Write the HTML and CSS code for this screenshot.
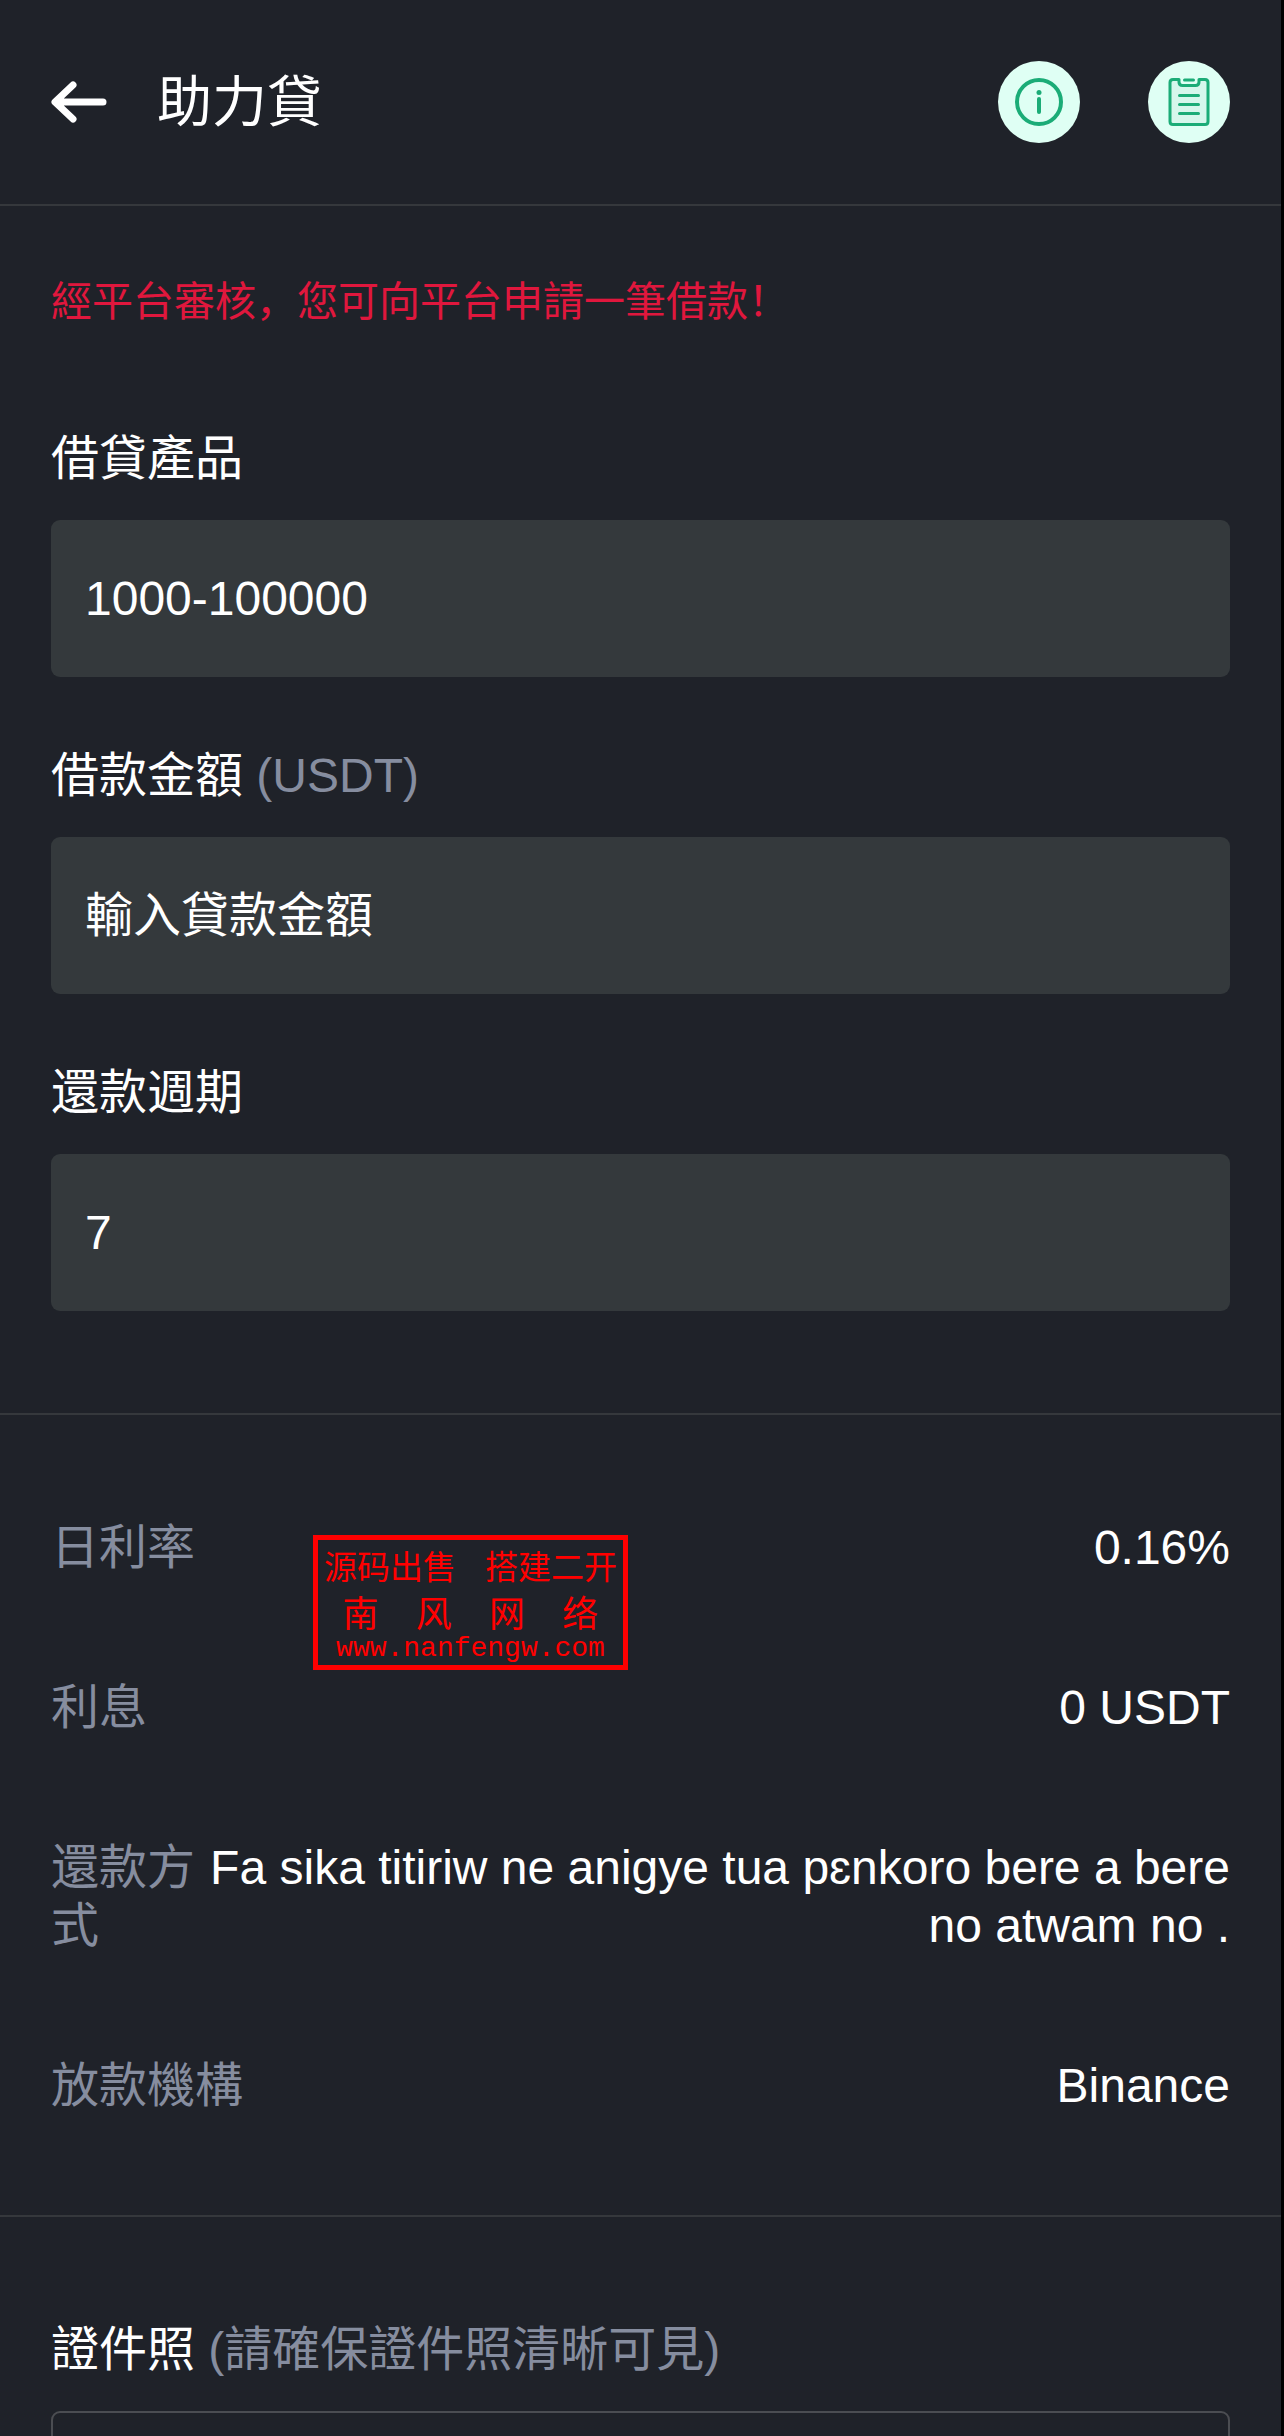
FILE: index.html
```html
<!DOCTYPE html>
<html lang="zh-CN">
<head>
    <meta charset="UTF-8">
    <meta name="viewport" content="width=device-width, initial-scale=1.0">
    <title>助力貸</title>
    <link rel="stylesheet" href="styles.css">
</head>
<body>

    <header class="header">
        <button class="icon-button" type="button" aria-label="返回">
            <svg class="back-icon" viewBox="0 0 56 42" fill="none" stroke="#fff" stroke-width="7" stroke-linecap="round" stroke-linejoin="round">
                <path d="M22 4 L4 21 L22 38 M5 21 H52"/>
            </svg>
        </button>
        <h1>助力貸</h1>
        <div class="header-actions">
            <button class="icon-button" type="button" aria-label="說明">
                <svg class="round-icon" viewBox="0 0 82 82" fill="none" stroke="#1bac77" stroke-width="4" stroke-linecap="round">
                    <circle cx="41" cy="41" r="41" fill="#dffff4" stroke="none"/>
                    <circle cx="41" cy="41" r="22"/>
                    <path d="M41 38 V51"/>
                    <circle cx="41" cy="31.5" r="2.5" fill="#1bac77" stroke="none"/>
                </svg>
            </button>
            <button class="icon-button" type="button" aria-label="借款記錄">
                <svg class="round-icon" viewBox="0 0 82 82" fill="none" stroke="#1bac77" stroke-width="3" stroke-linecap="round" stroke-linejoin="round">
                    <circle cx="41" cy="41" r="41" fill="#dffff4" stroke="none"/>
                    <path d="M31 18.5 H25 Q22 18.5 22 21.5 V60.5 Q22 63.5 25 63.5 H57 Q60 63.5 60 60.5 V21.5 Q60 18.5 57 18.5 H51 V21 Q51 24.5 47.5 24.5 H34.5 Q31 24.5 31 21 V18.5" fill="#d6f7ec"/>
                    <path d="M36.5 19 H45.5 M31.5 34.5 H50.5 M31.5 43.5 H50.5 M31.5 52.5 H50.5"/>
                </svg>
            </button>
        </div>
    </header>

    <main>
        <form class="section form">
            <p class="notice">經平台審核，您可向平台申請一筆借款！</p>

            <div class="field">
                <label for="product">借貸產品</label>
                <select id="product" class="control">
                    <option>1000-100000</option>
                </select>
            </div>

            <div class="field">
                <label for="amount">借款金額 <span class="muted">(USDT)</span></label>
                <input id="amount" class="control" type="text" placeholder="輸入貸款金額">
            </div>

            <div class="field">
                <label for="period">還款週期</label>
                <select id="period" class="control">
                    <option>7</option>
                </select>
            </div>
        </form>

        <section class="section details">
            <div class="row">
                <span class="muted">日利率</span>
                <span class="value">0.16%</span>
            </div>
            <div class="row">
                <span class="muted">利息</span>
                <span class="value">0 USDT</span>
            </div>
            <div class="row">
                <span class="muted">還款方式</span>
                <span class="value">Fa sika titiriw ne anigye tua pɛnkoro bere a bere no atwam no .</span>
            </div>
            <div class="row">
                <span class="muted">放款機構</span>
                <span class="value">Binance</span>
            </div>

            <!-- Stamp over the rows -->
            <div class="stamp">
                <div class="stamp-top"><span>源码出售</span><span>搭建二开</span></div>
                <div class="stamp-name"><span>南</span><span>风</span><span>网</span><span>络</span></div>
                <div class="stamp-url">www.nanfengw.com</div>
            </div>
        </section>

        <section class="section">
            <h2>證件照 <span class="muted">(請確保證件照清晰可見)</span></h2>
            <div class="upload"></div>
        </section>
    </main>

</body>
</html>
```

FILE: styles.css
```css
* {
    box-sizing: border-box;
}

html {
    background-color: #000;
}

body {
    height: 100vh;
    margin: 0 3px 0 0;
    overflow: hidden;
    background-color: #1f2229;
    color: #fff;
    font-family: "Liberation Sans", "Noto Sans CJK SC", sans-serif;
    font-size: 48px;
    line-height: 58px;
}

h1,
h2,
p {
    margin: 0;
    font-weight: normal;
}

/* Header */
.header {
    display: flex;
    align-items: center;
    padding: 61px 51px;
    border-bottom: 2px solid #35383c;
}

.header h1 {
    margin-left: 50px;
    font-size: 55px;
}

.header-actions {
    display: flex;
    gap: 68px;
    margin-left: auto;
}

.icon-button {
    display: flex;
    padding: 0;
    border: none;
    background: none;
    cursor: pointer;
}

.back-icon {
    width: 56px;
    height: 42px;
}

.round-icon {
    width: 82px;
    height: 82px;
}

/* Sections */
.section {
    padding: 104px 51px 100px;
    border-bottom: 2px solid #35383c;
}

.form {
    display: flex;
    flex-direction: column;
    gap: 70px;
    padding-top: 72px;
    padding-bottom: 102px;
}

.notice {
    margin-bottom: 34px;
    color: #e0173d;
    font-size: 41px;
    line-height: 48px;
}

.muted {
    color: #868d9f;
}

.field {
    display: flex;
    flex-direction: column;
    gap: 32px;
}

.control {
    width: 100%;
    height: 157px;
    padding: 0 34px;
    border: none;
    border-radius: 9px;
    outline: none;
    background-color: #34393c;
    color: #fff;
    font: inherit;
    appearance: none;
}

.control::placeholder {
    color: #fff;
    opacity: 1;
}

/* Loan details */
.details {
    position: relative;
    display: flex;
    flex-direction: column;
    gap: 102px;
}

.row {
    display: flex;
    justify-content: space-between;
}

.value {
    text-align: right;
}

.stamp {
    position: absolute;
    top: 120px;
    left: 313px;
    width: 315px;
    padding: 4px 6px;
    border: 5px solid #f00;
    color: #f00;
    font-family: "Noto Sans CJK SC", sans-serif;
}

.stamp-top {
    display: flex;
    justify-content: space-between;
    font-size: 33px;
    line-height: 42px;
}

.stamp-name {
    display: flex;
    justify-content: space-around;
    font-size: 36px;
    line-height: 50px;
}

.stamp-url {
    font-family: "Liberation Mono", monospace;
    font-size: 28px;
    line-height: 25px;
    text-align: center;
}

/* ID photo */
.upload {
    height: 400px;
    margin-top: 32px;
    border: 2px solid #4b4d52;
    border-radius: 9px;
}

h2 {
    font-size: 48px;
}
```
